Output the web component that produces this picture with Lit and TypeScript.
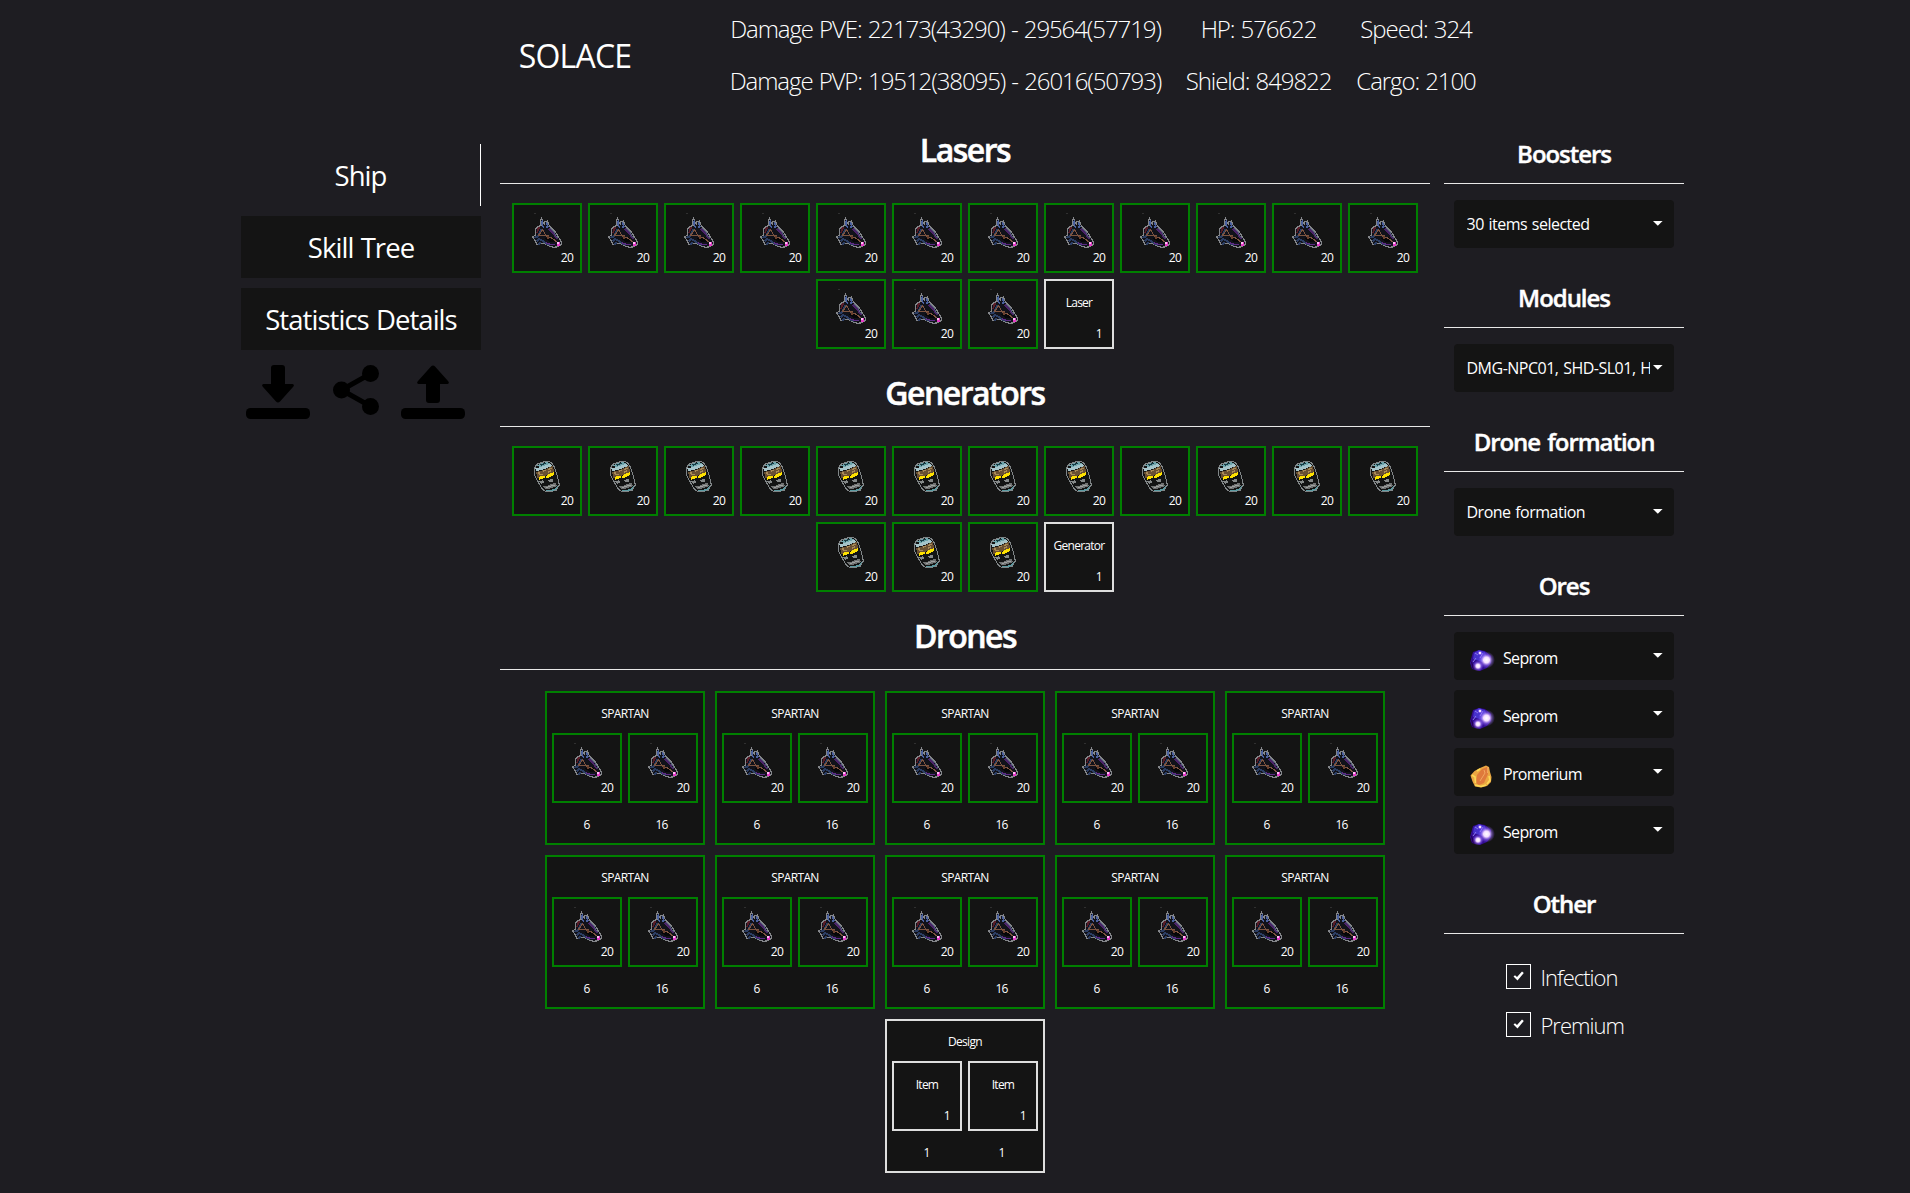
import { LitElement, html, css, svg } from "lit";
import { customElement, property } from "lit/decorators.js";
import { classMap } from "lit/directives/class-map.js";

const laserIcon = svg`
  <path d="M22 10.300h2v.9h-2z" fill="#303030"/>
  <path d="M28.200 19l1.300-3.500L31 19l1.500 2L33 18.500l2.500-.5 1.500 4 2.500 3 4 4 2.500 4.500 3 4.500.5 3-2 2.500-6 .8-6-1.800-3-2.500-3.500.8-4 .5-1.500-3-3-4.500 3-1.500v-6l2-2.800 3.500-1z" fill="#11121a" stroke="#84868a" stroke-width="1.200"/>
  <path d="M30 17.500l.3 5 2 2M34.500 19.500l1.500 4-2 1" fill="none" stroke="#4a61a0" stroke-width="1.500"/>
  <path d="M25 26.500l3-2M25 30l1-3" stroke="#5a1c28" stroke-width="1.800"/>
  <path d="M22 34.500l3.500-.5 4-8M24.500 38.500l2.500-2.500 4 2 4 3 3 .8M26 41.500l3-2" fill="none" stroke="#2c3e64" stroke-width="1.800"/>
  <path d="M37 26l4 4 4.500 6.500" fill="none" stroke="#4b2468" stroke-width="1.600"/>
  <path d="M38 24.500l4 4 4 6" fill="none" stroke="#5a6a86" stroke-width=".9"/>
  <path d="M32 35l5 3.500 8 1-5-6z" fill="#060608"/>
  <path d="M31 26l-4.500 6.500 10 .5M30.500 26l3 6 2.500 2 3 .5 6.500 5" fill="none" stroke="#7d5440" stroke-width="1.200"/>
  <path d="M34.500 33h2.500v2.500h-2.500z" fill="#69402e"/>
  <path d="M34 39.700l4 1.500 5 .3" fill="none" stroke="#5d2a86" stroke-width="1.200"/>
  <path d="M45 39h3v3.500h-3z" fill="#e33ac5"/><path d="M45.300 39.300h1.700v1.700h-1.700z" fill="#ffc3f5"/>`;

const generatorIcon = svg`
  <path d="M22.500 24l.8-4L26 17.800l8-2.500 5 .9 3.300 4.500 3.200 10 1.800 8.300-3 5-5 1.500H34l-3.300-2-4-6.500-3.700-7z" fill="#131414" stroke="#808587" stroke-width="1.100"/>
  <path d="M24.500 20l3-2 7-2 4 1.200-3 1.800-7 1.800z" fill="#6fa5ac"/>
  <path d="M27.500 18.700l5-1.500 2 .5-5 2z" fill="#173c45"/>
  <path d="M23.500 22.500l5-1.500 10-3.300 2 2-9 3.800-7.500 1.500z" fill="#a5c4ca"/>
  <path d="M23.800 26l8-2 8.700-4.500 2 7-8.500 3-8.500 2.500z" fill="#6a5032"/>
  <path d="M25.500 27.300l3-.6M31 25.300l3-1M36.500 23.500l3-1.200M36 26l3-1M27.500 29l3-.8" stroke="#a98a58" stroke-width="1.300"/>
  <path d="M26.300 31l6-1.600.7 2.600-5.500 1.600zM33.500 31.200l2.500-3.200 6-1.800-.5 3-6 2.800z" fill="#ffe100"/>
  <path d="M27.500 35.500l3-1.200 2 2-3 1.500zM36 34.500l3-1.800 2.500.8-1 2-3 1z" fill="#858989"/>
  <path d="M30.800 40l3 .2 9.700-3.700 1.500 3.500-10 3.500-2-.5z" fill="#717373"/>
  <path d="M33.500 41.500l9-2.700" stroke="#a4a6a6" stroke-width=".9"/>
  <path d="M32.500 43.500l2.500 1.500h6l4-2 .8-3-2.300 2.500-5 1.300z" fill="#5b9ba2"/>`;

@customElement("item-slot")
export class ItemSlot extends LitElement {
  @property() kind = "";
  @property() label = "";
  @property() level = "20";
  static styles = css`
    :host { display: block; width: 70px; height: 70px; }
    .slot { box-sizing: border-box; width: 70px; height: 70px; display: grid; grid-template: 66px / 66px; background: #141414; border: 2px solid #008000; font-size: 12px; line-height: 16px; }
    .empty { border-color: #dedede; }
    .icon, .label, .level { grid-area: 1 / 1; }
    .icon { width: 70px; height: 70px; margin: -2px; }
    .label { justify-self: center; padding-top: 14px; letter-spacing: -0.75px; }
    .level { align-self: end; justify-self: end; width: 26px; margin-bottom: 5px; text-align: center; letter-spacing: -0.6px; }
  `;
  render() {
    return html`<div class=${classMap({ slot: true, empty: !!this.label })}>
      ${this.label
        ? html`<span class="label">${this.label}</span>`
        : html`<svg class="icon" viewBox="0 0 70 70" shape-rendering="crispEdges">${this.kind === "laser" ? laserIcon : generatorIcon}</svg>`}
      <span class="level">${this.level}</span>
    </div>`;
  }
}

@customElement("drone-card")
export class DroneCard extends LitElement {
  @property({ type: Boolean }) empty = false;
  static styles = css`
    :host { display: block; }
    .card { box-sizing: border-box; width: 160px; height: 154px; background: #141414; border: 2px solid #008000; font-size: 12px; }
    .empty { border-color: #dedede; }
    .title { height: 40px; line-height: 42px; text-align: center; letter-spacing: -0.65px; }
    .items { display: flex; gap: 6px; padding-left: 5px; }
    .levels { display: grid; grid-template-columns: 75px 75px; padding: 2px 0 0 2px; line-height: 40px; text-align: center; letter-spacing: -0.8px; }
  `;
  render() {
    const e = this.empty;
    const slot = html`<item-slot kind="laser" label=${e ? "Item" : ""} level=${e ? "1" : "20"}></item-slot>`;
    return html`<div class=${classMap({ card: true, empty: e })}>
      <div class="title">${e ? "Design" : "SPARTAN"}</div>
      <div class="items">${slot}${slot}</div>
      <div class="levels"><span>${e ? "1" : "6"}</span><span>${e ? "1" : "16"}</span></div>
    </div>`;
  }
}

@customElement("select-box")
export class SelectBox extends LitElement {
  @property() text = "";
  @property() ore = "";
  static styles = css`
    :host { display: block; }
    .box { box-sizing: border-box; height: 48px; display: flex; padding: 0 11.500px 0 12.500px; border-radius: 4px; background: #141414; font-size: 16px; line-height: 48px; }
    .text { flex: 1; width: 183px; overflow: hidden; white-space: nowrap; letter-spacing: -0.5px; word-spacing: 1px; }
    .ore .text { line-height: 52px; letter-spacing: -0.65px; }
    .caret { margin: 21px 0 0 3px; width: 9.6px; height: 5px; fill: #fff; flex: none; }
    .gem { width: 30px; height: 30px; margin: 14px 6.500px 0 0; flex: none; }
  `;
  gem() {
    return this.ore === "seprom"
      ? html`<svg class="gem" viewBox="0 0 30 30">
          <defs>
            <radialGradient id="h"><stop offset="0" stop-color="#fff"/><stop offset=".35" stop-color="#f4dcff"/><stop offset=".65" stop-color="#a67dff" stop-opacity=".5"/><stop offset="1" stop-color="#8550ff" stop-opacity="0"/></radialGradient>
            <filter id="b"><feGaussianBlur stdDeviation=".6"/></filter>
          </defs>
          <path d="M6 6l6-2 6 1 6 5v7l-4 5-7 3-8-2-2-6z" fill="#330b91" filter="url(#b)"/>
          <path d="M7 7l5-3 6 2 2 7-5 3-9-3z" fill="#4630cc" filter="url(#b)"/>
          <path d="M3.500 14l3 5 5 5-6-1z" fill="#26005c"/>
          <path d="M8 7l3 2M16 7l-3 5M9 12l-3 4" stroke="#8d76ee" stroke-width="1"/>
          <circle cx="19.500" cy="14" r="8.500" fill="url(#h)"/><circle cx="11" cy="20" r="5.500" fill="url(#h)"/><circle cx="13" cy="7" r="2.500" fill="url(#h)"/>
        </svg>`
      : html`<svg class="gem" viewBox="0 0 30 30">
          <defs><filter id="b"><feGaussianBlur stdDeviation=".5"/></filter></defs>
          <g filter="url(#b)">
            <path d="M13 6l6-2.500 3 1.500 1 5 1.500 5-.5 5-4 4-6 1.500-6-1-2.500-5-2-6 4-4.500z" fill="#eba742"/>
            <path d="M15 7l5-2 1 7-4 9-5 2-3-2 1-8z" fill="#df7a3a"/>
            <path d="M5 13l3 2 .5 6M8 23l6 1.500 5-1.500M22 14l1 4-3 4M10 9l3-2" fill="none" stroke="#fbd957" stroke-width="1.600"/>
            <path d="M17 8l1 3-5 8M21 5l-.5 6" fill="none" stroke="#f2a661" stroke-width="1"/>
          </g>
        </svg>`;
  }
  render() {
    return html`<div class=${classMap({ box: true, ore: !!this.ore })}>
      ${this.ore ? this.gem() : null}
      <span class="text">${this.text}</span>
      <svg class="caret" viewBox="0 0 9.600 5"><path d="M0 0h9.600L4.800 4.800z"/></svg>
    </div>`;
  }
}

@customElement("app-root")
export class AppRoot extends LitElement {
  static styles = css`
    :host { display: block; width: 1910px; height: 1193px; overflow: hidden; background: #1e1d22; color: #fff; font-family: "Open Sans", "Noto Sans", sans-serif; }
    .header { display: flex; height: 129px; box-sizing: border-box; padding: 3px 0 0 500px; }
    .name { width: 150px; text-align: center; font-size: 32px; line-height: 105px; letter-spacing: -0.8px; }
    .stats { margin-left: 67px; display: grid; grid-template-columns: 457px 169px 146px; grid-auto-rows: 52px; line-height: 52px; text-align: center; font-size: 24px; font-weight: 300; letter-spacing: -1.08px; word-spacing: 1px; white-space: nowrap; }
    .body { display: flex; padding-left: 241px; }
    .side { width: 240px; padding-top: 15px; }
    .tab { height: 62px; box-sizing: border-box; margin-bottom: 10px; background: #141414; text-align: center; font-size: 27.500px; line-height: 64px; letter-spacing: -0.95px; word-spacing: 1px; }
    .active { background: none; border-right: 1px solid #fff; }
    .tools { display: flex; padding: 5px 0 0 5px; }
    .tool { width: 64px; height: 54px; }
    .share { width: 46px; margin: 0 22px 0 23px; }
    .main { width: 930px; margin-left: 19px; }
    .heading { margin: 0 0 19px; padding: 1px 0 13px; border-bottom: 1px solid #e8e8e8; text-align: center; font-size: 32px; line-height: 40px; font-weight: 600; letter-spacing: -1.500px; -webkit-text-stroke: 0.5px #fff; }
    .slots { display: flex; flex-wrap: wrap; justify-content: center; gap: 6px; margin-bottom: 23px; }
    .drones { display: flex; flex-wrap: wrap; justify-content: center; gap: 10px; padding: 2px 40px 0; }
    .options { width: 240px; margin-left: 14px; }
    .subheading { margin: 0 0 16px; padding: 5px 0 10px; border-bottom: 1px solid #e8e8e8; text-align: center; font-size: 24px; line-height: 39px; font-weight: 600; letter-spacing: -1.05px; word-spacing: 2px; -webkit-text-stroke: 0.4px #fff; }
    .selects { display: flex; flex-direction: column; gap: 10px; padding: 0 10px; margin-bottom: 25px; }
    .checks { display: flex; flex-direction: column; gap: 23px; padding: 14px 0 0 62px; font-size: 22px; font-weight: 300; letter-spacing: -1px; }
    .check { display: flex; gap: 9.500px; height: 25px; line-height: 26px; }
    .mark { width: 23px; height: 23px; border: 1px solid #fff; }
  `;
  section(title: string, boxes: { text: string; ore?: string }[]) {
    return html`<h3 class="subheading">${title}</h3>
      <div class="selects">${boxes.map((b) => html`<select-box text=${b.text} ore=${b.ore ?? ""}></select-box>`)}</div>`;
  }
  slots(kind: string, label: string) {
    return html`<div class="slots">
      ${Array.from({ length: 15 }, () => html`<item-slot kind=${kind}></item-slot>`)}
      <item-slot label=${label} level="1"></item-slot>
    </div>`;
  }
  render() {
    const stats = ["Damage PVE: 22173(43290) - 29564(57719)", "HP: 576622", "Speed: 324", "Damage PVP: 19512(38095) - 26016(50793)", "Shield: 849822", "Cargo: 2100"];
    return html`
      <header class="header">
        <div class="name">SOLACE</div>
        <div class="stats">${stats.map((s) => html`<span>${s}</span>`)}</div>
      </header>
      <div class="body">
        <nav class="side">
          <div class="tab active">Ship</div>
          <div class="tab">Skill Tree</div>
          <div class="tab">Statistics Details</div>
          <div class="tools">
            <svg class="tool" viewBox="0 0 64 54"><rect y="43" width="64" height="11" rx="4.500"/><path d="M28 0h8q3 0 3 3v16h7.500q2.500.5.500 3L34 36.500q-2 2-4 0L17 22q-2-2.500.5-3H25V3q0-3 3-3z"/></svg>
            <svg class="tool share" viewBox="0 0 46 54"><path d="M38 8.500L8.500 25 38 41.500" fill="none" stroke="#000" stroke-width="5"/><circle cx="37.500" cy="8.500" r="8.500"/><circle cx="8.500" cy="25" r="8.500"/><circle cx="37.500" cy="41.500" r="8.500"/></svg>
            <svg class="tool" viewBox="0 0 64 54"><rect y="43" width="64" height="11" rx="4.500"/><path d="M28 38h8q3 0 3-3V19h7.500q2.500-.5.500-3L34 1.500q-2-2-4 0L17 16q-2 2.500.5 3H25v16q0 3 3 3z"/></svg>
          </div>
        </nav>
        <main class="main">
          <h2 class="heading">Lasers</h2>
          ${this.slots("laser", "Laser")}
          <h2 class="heading">Generators</h2>
          ${this.slots("generator", "Generator")}
          <h2 class="heading">Drones</h2>
          <div class="drones">
            ${Array.from({ length: 10 }, () => html`<drone-card></drone-card>`)}
            <drone-card empty></drone-card>
          </div>
        </main>
        <aside class="options">
          ${this.section("Boosters", [{ text: "30 items selected" }])}
          ${this.section("Modules", [{ text: "DMG-NPC01, SHD-SL01, HON-HP01" }])}
          ${this.section("Drone formation", [{ text: "Drone formation" }])}
          ${this.section("Ores", [
            { text: "Seprom", ore: "seprom" },
            { text: "Seprom", ore: "seprom" },
            { text: "Promerium", ore: "promerium" },
            { text: "Seprom", ore: "seprom" },
          ])}
          <h3 class="subheading">Other</h3>
          <div class="checks">
            ${["Infection", "Premium"].map((t) => html`<div class="check">
              <svg class="mark" viewBox="0 0 23 23"><path d="M6.500 11.500l1.500-1.300 2 1.800 5-5.500 1.800 1.500-6.300 7.500z" fill="#fff"/></svg>
              <span>${t}</span>
            </div>`)}
          </div>
        </aside>
      </div>`;
  }
}
